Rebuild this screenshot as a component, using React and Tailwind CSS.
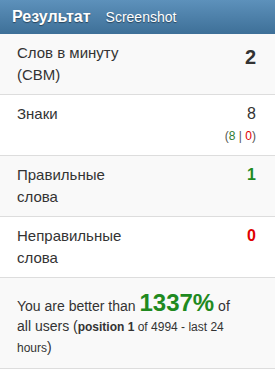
import React from 'react';

const rows = [
  { label: 'Слов в минуту (СВМ)', value: '2', cls: 'text-[20px] leading-[30px] font-bold text-[#333]' },
  { label: 'Знаки', value: '8', cls: 'text-[16px] text-[#333]', extra: true },
  { label: 'Правильные слова', value: '1', cls: 'text-[16px] font-bold text-[#1f8a1f]' },
  { label: 'Неправильные слова', value: '0', cls: 'text-[16px] font-bold text-[#e00000]' },
];

export default function App() {
  return (
    <div className="w-[275px] h-[381px] bg-white text-[#333] font-['Liberation_Sans',Arial,sans-serif]">
      <div className="h-[34px] flex items-center gap-[15px] px-[12px] bg-gradient-to-b from-[#5d91bb] to-[#3e7098] text-white [text-shadow:0_1px_1px_rgba(0,0,0,0.45)]">
        <span className="text-[16px] font-bold">Результат</span>
        <span className="text-[14px]">Screenshot</span>
      </div>

      {rows.map((r, i) => (
        <div
          key={r.label}
          className={`flex justify-between border-b border-[#dddddd] pl-[17px] pr-[19px] py-2 text-[15px] leading-[22px] ${i % 2 === 0 ? 'bg-[#f9f9f9]' : 'bg-white'}`}
        >
          <div className="w-[118px]">{r.label}</div>
          <div className="text-right">
            <div className={r.cls}>{r.value}</div>
            {r.extra && (
              <div className="text-[12px] text-[#555]">
                (<span className="text-[#2e7d32]">8</span> | <span className="text-[#e00000]">0</span>)
              </div>
            )}
          </div>
        </div>
      ))}

      <div className="bg-[#f9f9f9] border-b border-[#dddddd] pl-[17px] pt-[15px] pb-[10px]">
        <p className="w-[220px] text-[14px] leading-[20px]">
          You are better than <span className="text-[24px] font-bold text-[#1f8a1f]">1337%</span> of all users (
          <small className="text-[12px]"><b>position 1</b> of 4994 - last 24 hours</small>)
        </p>
      </div>
    </div>
  );
}
